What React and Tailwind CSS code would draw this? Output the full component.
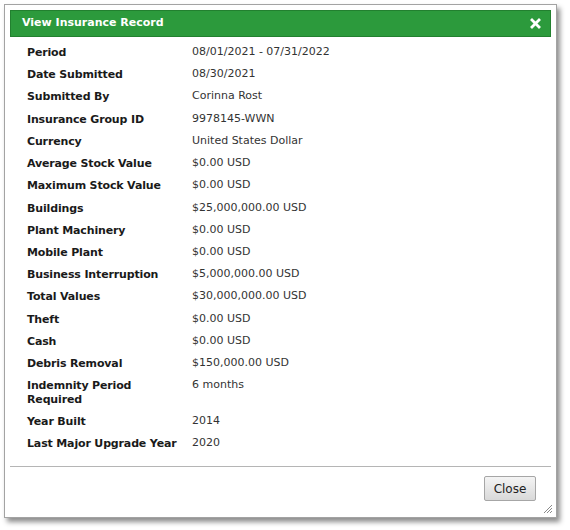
import React from 'react';

// Campos del registro de seguro
const fields = [
  ['Period', '08/01/2021 - 07/31/2022'],
  ['Date Submitted', '08/30/2021'],
  ['Submitted By', 'Corinna Rost'],
  ['Insurance Group ID', '9978145-WWN'],
  ['Currency', 'United States Dollar'],
  ['Average Stock Value', '$0.00 USD'],
  ['Maximum Stock Value', '$0.00 USD'],
  ['Buildings', '$25,000,000.00 USD'],
  ['Plant Machinery', '$0.00 USD'],
  ['Mobile Plant', '$0.00 USD'],
  ['Business Interruption', '$5,000,000.00 USD'],
  ['Total Values', '$30,000,000.00 USD'],
  ['Theft', '$0.00 USD'],
  ['Cash', '$0.00 USD'],
  ['Debris Removal', '$150,000.00 USD'],
  ['Indemnity Period Required', '6 months'],
  ['Year Built', '2014'],
  ['Last Major Upgrade Year', '2020'],
];

const App = () => {
  return (
    <div className="bg-white min-h-[530px] p-1 font-['DejaVu_Sans',Verdana,sans-serif]">
      {/* Dialog */}
      <div className="relative w-[553px] h-[514px] flex flex-col border border-[#a3a3a3] bg-white p-[5px] shadow-[3px_4px_5px_rgba(0,0,0,0.45)]">
        {/* Title bar */}
        <div className="h-[27px] shrink-0 flex items-center justify-between bg-[#2c9a3c] border border-[#22802f] pl-[11px] pr-[9px]">
          <span className="text-white font-bold text-[11px]">View Insurance Record</span>
          <svg width="11" height="11" viewBox="0 0 11 11">
            <path d="M2 2 L9 9 M9 2 L2 9" stroke="#fff" strokeWidth="2.8" strokeLinecap="square" />
          </svg>
        </div>

        {/* Contenido */}
        <div className="flex-1 pt-[8px] pl-[17px]">
          <div className="grid grid-cols-[165px_1fr] gap-y-[8.9px] text-[11px] leading-[13.33px]">
            {fields.map(([label, value]) => (
              <React.Fragment key={label}>
                <div className="font-bold text-[#1a1a1a] pr-[12px] tracking-[-0.15px] translate-y-px">{label}</div>
                <div className="text-[#333]">{value}</div>
              </React.Fragment>
            ))}
          </div>
        </div>

        {/* Pie con botón */}
        <div className="shrink-0 border-t border-[#b5b5b5] pt-[9px] pb-[11px] pr-[15px] flex justify-end">
          <button className="h-[25px] w-[52px] border border-[#a6a6a6] rounded-[2px] bg-gradient-to-b from-[#f4f4f4] to-[#d9d9d9] text-[12px] text-[#222]">
            Close
          </button>
        </div>

        {/* Esquina de redimensionado */}
        <svg className="absolute right-[3px] bottom-[3px]" width="10" height="10" viewBox="0 0 10 10">
          <path d="M9 1 L1 9 M9 4 L4 9 M9 7 L7 9" stroke="#8a8a8a" strokeWidth="1" />
        </svg>
      </div>
    </div>
  );
};

export default App;
